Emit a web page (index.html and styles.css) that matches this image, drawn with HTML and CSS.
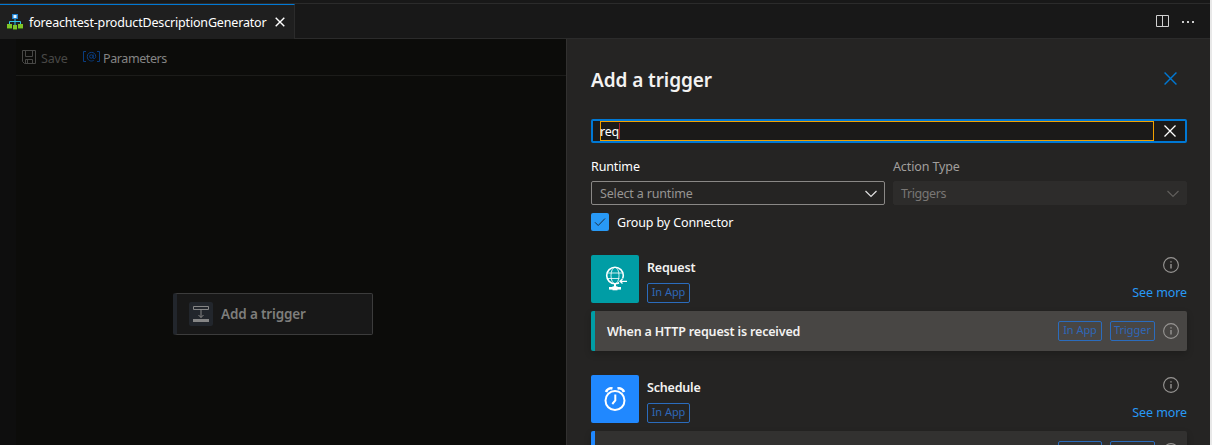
FILE: index.html
```html
<!DOCTYPE html>
<html lang="en">
<head>
<meta charset="utf-8">
<title>foreachtest-productDescriptionGenerator</title>
<link rel="stylesheet" href="styles.css">
</head>
<body>
<svg class="defs" width="0" height="0">
  <symbol id="info" viewBox="0 0 16 16"><circle cx="8" cy="8" r="7.4" fill="none" stroke="currentColor" stroke-width="1.1"/><path d="M8 7v4.5M8 4.2v1.3" stroke="currentColor" stroke-width="1.4"/></symbol>
  <symbol id="chevron" viewBox="0 0 12 8"><path d="M.5 1 6 6.5 11.500 1" fill="none" stroke="currentColor" stroke-width="1.2"/></symbol>
  <symbol id="cross" viewBox="0 0 12 12"><path d="M.5.5l11 11M11.500.5l-11 11" stroke="currentColor" stroke-width="1.3"/></symbol>
</svg>
<div class="window">
  <header class="tabbar">
    <div class="tab">
      <svg class="tab-icon" width="16" height="16" viewBox="0 0 16 16">
        <path d="M8 5v6M2.500 11V7.500h11V11" fill="none" stroke="#32c5e8" stroke-width="1"/>
        <path d="M5 0h6v5H5z" fill="#1d80d0"/><path d="M6.500 1h3v3h-3z" fill="#e8f6ff"/>
        <path d="M0 10h5v4H0zM6 11h4v4H6zM11 10h5v4h-5z" fill="#7fc528"/>
        <path d="M0 14h5v1H0zM6 15h4v1H6zM11 14h5v1h-5z" fill="#3c7314"/>
      </svg>
      <span class="tab-name">foreachtest-productDescriptionGenerator</span>
      <svg class="tab-close" width="10" height="10" viewBox="0 0 10 10"><path d="M.7.700l8.600 8.600M9.300.7.700 9.300" stroke="#fff" stroke-width="1.400"/></svg>
    </div>
    <div class="tab-actions">
      <svg width="14" height="14" viewBox="0 0 14 14" fill="none" stroke="#d0d0d0"><path d="M.5 1.500h12v11H.5zM6.500 1.500v11"/></svg>
      <svg width="14" height="14" viewBox="0 0 14 14" fill="#ccc"><path d="M0 7h2v2H0zM5 7h2v2H5zM10 7h2v2h-2z"/></svg>
    </div>
  </header>
  <main class="editor">
    <section class="designer">
      <div class="toolbar">
        <svg width="14" height="14" viewBox="0 0 14 14" fill="none" stroke="#484846"><path d="M.5.5h13v13H2.500l-2-2zM3.500.5v6h7v-6M3.500 13.500v-4h7v4M5.500 10v3"/></svg>
        <span class="save">Save</span>
        <svg class="param-icon" width="17" height="14" viewBox="0 0 17 14" fill="none" stroke="#0a3d80"><path d="M3 1.500H.5v10H3M14 1.500h2.500v10H14"/><circle cx="8.300" cy="6.500" r="1.700"/><path d="M10.200 4.500v3.300c0 1.600 2.500.8 2.500-1.300 0-5.500-8.400-5.500-8.400 0 0 4.300 3.800 5.300 6.400 3.900"/></svg>
        <span class="params">Parameters</span>
      </div>
      <div class="canvas">
        <div class="node">
          <span class="node-icon"><svg width="18" height="18" viewBox="0 0 18 18" fill="none" stroke="#858585"><path d="M1.500 1.500h15v3h-15zM9 4.500v8M6.500 10 9 12.500l2.500-2.500"/><path d="M1 14h16v3H1z" fill="#858585" stroke="none"/></svg></span>
          <span class="node-name">Add a trigger</span>
        </div>
      </div>
    </section>
    <aside class="panel">
      <div class="panel-head"><h1>Add a trigger</h1><svg class="panel-close" width="13" height="13"><use href="#cross"/></svg></div>
      <div class="search"><div class="search-field"><span>req</span></div><svg width="12" height="12"><use href="#cross"/></svg></div>
      <div class="filters">
        <div class="filter"><label>Runtime</label><div class="select"><span class="placeholder">Select a runtime</span><svg width="12" height="8"><use href="#chevron"/></svg></div></div>
        <div class="filter disabled"><label>Action Type</label><div class="select"><span class="triggers">Triggers</span><svg width="12" height="8"><use href="#chevron"/></svg></div></div>
      </div>
      <div class="group"><span class="check"><svg width="12" height="10" viewBox="0 0 12 10"><path d="M1 5.300 4.200 8.500 11 1.500" fill="none" stroke="#1c2c40"/></svg></span><span class="group-name">Group by Connector</span></div>

      <section class="connector request">
        <div class="connector-head">
          <div class="logo"><svg width="24" height="28" viewBox="0 0 24 28" fill="none" stroke="#fff"><circle cx="12" cy="10.500" r="8.300" stroke-width="1.600"/><ellipse cx="12" cy="10.500" rx="4" ry="8.200" stroke-width=".8"/><path d="M4 8h16M4 13.500h13" stroke-width=".8"/><path d="M12 18.500v4" stroke-width="2"/><path d="M6 23.300h12" stroke-width="2.600"/><path d="M9.500 21.300h5v4h-5z" fill="#fff" stroke="none"/><path d="M16 13.500h8v5h-8z" fill="#009da5" stroke="none"/><path d="M24 16.300h-7M19.500 14l-2.500 2.300 2.500 2.300" stroke-width="1.300"/></svg></div>
          <div class="about"><strong>Request</strong><span class="badge">In App</span></div>
          <div class="side"><svg class="info" width="16" height="16"><use href="#info"/></svg><a>See more</a></div>
        </div>
        <div class="operation hovered"><strong>When a HTTP request is received</strong><span class="badge wide">In App</span><span class="badge trigger">Trigger</span><svg class="info" width="16" height="16"><use href="#info"/></svg></div>
      </section>

      <section class="connector schedule">
        <div class="connector-head">
          <div class="logo"><svg width="24" height="28" viewBox="0 0 24 28" fill="none" stroke="#fff"><circle cx="12" cy="15.500" r="9.500" stroke-width="2"/><path d="M12.300 9.500V15.500l-3 3.500" stroke-width="2"/><path d="M3 7c.8-2.500 3.500-4.300 6.500-3.500M14.500 3.500c3-.8 5.700 1 6.500 3.500" stroke-width="2.600"/></svg></div>
          <div class="about"><strong>Schedule</strong><span class="badge">In App</span></div>
          <div class="side"><svg class="info" width="16" height="16"><use href="#info"/></svg><a>See more</a></div>
        </div>
        <div class="operation"><strong></strong><span class="badge wide"></span><span class="badge trigger"></span><svg class="info" width="16" height="16"><use href="#info"/></svg></div>
      </section>
    </aside>
  </main>
</div>
</body>
</html>
```
FILE: styles.css
```css
* { box-sizing: border-box; }
body { margin: 0; background: #e8e8e8; font-family: "Noto Sans", sans-serif; font-size: 12.5px; letter-spacing: -.2px; line-height: 18px; color: #fff; overflow: hidden; }
svg { display: block; flex: none; }
.defs { position: absolute; }
span, strong, label, a, h1 { white-space: nowrap; }
.window { width: 1210px; height: 445px; overflow: hidden; background: #181818; padding-top: 3px; }
.tabbar { display: flex; justify-content: space-between; height: 36px; border-top: 1px solid #2b2b2b; border-bottom: 1px solid #2b2b2b; }
.tab { display: flex; align-items: center; width: 295px; height: 35px; padding-left: 7px; background: #1f1f1f; border-top: 1px solid #0078d4; border-right: 1px solid #2b2b2b; }
.tab-icon { margin-right: 6px; }
.tab-name { width: 238px; padding-top: 1px; letter-spacing: -.17px; }
.tab-close { margin-left: 8px; }
.tab-actions { display: flex; gap: 12px; padding: 10px 14px 0 0; }
.editor { display: flex; height: 406px; }
.designer { width: 566px; padding-left: 16px; background: #0e0e0e; }
.toolbar { display: flex; align-items: center; height: 37px; padding-left: 6px; background: #0c0c0a; border-bottom: 1px solid #1c1c1a; }
.save { width: 27px; margin: 3px 15px 0 5px; color: #484846; }
.param-icon { margin-right: 3px; }
.params { margin-top: 3px; color: #858585; letter-spacing: -.4px; }
.canvas { height: 369px; padding: 217px 0 0 157px; background: #0c0c0a; }
.node { display: flex; align-items: center; width: 200px; height: 42px; padding-left: 12px; background: #181818; border: 1px solid #3c3c3c; border-left: 4px solid #22262c; border-radius: 2px; }
.node-icon { display: grid; place-items: center; width: 24px; height: 24px; background: #22262c; border-radius: 2px; }
.node-name { margin-left: 8px; color: #7e7e7c; font-size: 13.500px; font-weight: 600; letter-spacing: -.15px; }
.panel { width: 644px; padding: 25px 23px 0 24px; background: #252423; border-left: 1px solid #323130; }
.panel-head { display: flex; align-items: center; justify-content: space-between; height: 32px; padding-right: 10px; }
h1 { margin: 0; font-size: 19px; font-weight: 600; letter-spacing: -.08px; line-height: 28px; color: #f3f2f1; }
.panel-close { color: #0078d4; margin-bottom: 3px; }
.search { display: flex; align-items: center; height: 24px; margin-top: 23px; padding: 0 9px 0 7px; background: #1b1a19; border: 2px solid #0078d4; border-radius: 2px; }
.search-field { width: 555px; height: 20px; border: 1px solid #f2a100; margin-right: 10px; line-height: 19px; }
.search-field span { display: inline-block; height: 16px; margin-left: -1px; line-height: 18px; border-right: 1px solid #a02030; }
.filters { display: flex; gap: 8px; margin-top: 14px; }
.filter { width: 294px; }
.filter label { display: block; height: 24px; line-height: 19px; letter-spacing: -.12px; }
.select { display: flex; align-items: center; justify-content: space-between; height: 24px; padding: 0 7px 0 8px; border: 1px solid #8a8886; border-radius: 2px; color: #e0e0e0; }
.select span { padding-top: 1px; letter-spacing: -.17px; }
.select svg { margin-top: 2px; }
.placeholder { color: #979593; }
.disabled label { color: #a19f9d; }
.disabled .select { padding-left: 7px; background: #2d2c2b; border-color: #2d2c2b; color: #605e5c; }
.disabled .triggers { color: #797775; letter-spacing: -.4px; }
.group { display: flex; align-items: center; gap: 8px; height: 18px; margin-top: 8px; }
.group-name { padding-top: 2px; letter-spacing: -.12px; }
.check { display: grid; place-items: center; width: 18px; height: 18px; background: #2899f5; border-radius: 2px; }
.connector { height: 120px; }
.request { margin-top: 24px; }
.connector-head { display: flex; height: 48px; }
.logo { display: grid; place-items: center; width: 48px; height: 48px; border-radius: 2px; background: #009da5; }
.schedule .logo { background: #2088ff; }
.about { display: flex; flex-direction: column; align-items: flex-start; flex: 1; padding: 4px 0 0 8px; }
.about strong { height: 24px; }
strong { font-weight: 600; color: #f3f2f1; }
.badge { width: 43px; height: 20px; border: 1px solid #2b6cbd; border-radius: 2px; color: #2e67b8; font-size: 11px; letter-spacing: -.05px; line-height: 16px; text-align: center; }
.side { display: flex; flex-direction: column; align-items: flex-end; padding-top: 2px; }
.info { color: #979593; margin-right: 8px; }
.side a { margin-top: 11px; color: #2899f5; letter-spacing: -.1px; }
.operation { display: flex; align-items: center; height: 40px; margin-top: 8px; padding-left: 12px; background: #323130; border-left: 4px solid #009da5; border-radius: 2px; box-shadow: 0 3px 7px #0003; }
.operation.hovered { background: #484644; }
.operation strong { flex: 1; padding-top: 2px; letter-spacing: -.17px; }
.operation .info { margin-bottom: 1px; }
.wide { width: 44px; margin-right: 8px; }
.trigger { width: 45px; margin-right: 8px; }
.schedule .operation { border-left-color: #2088ff; }
```
